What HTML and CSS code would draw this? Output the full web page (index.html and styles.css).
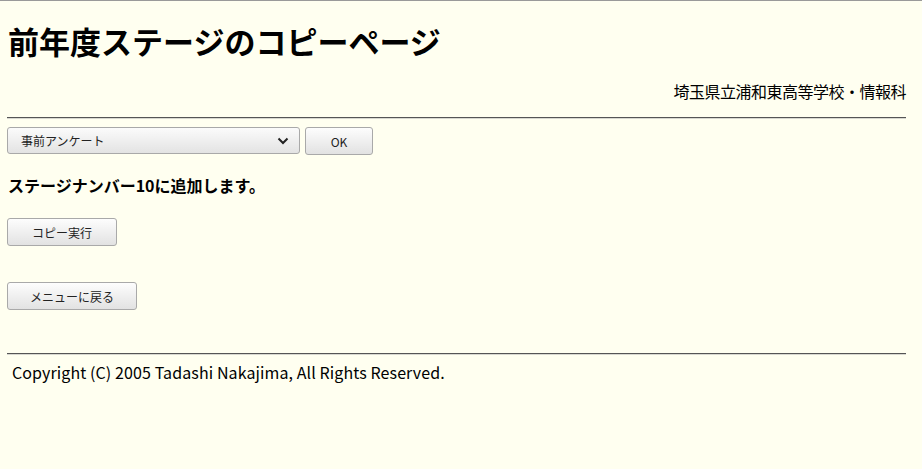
FILE: index.html
```html
<!DOCTYPE html>
<html lang="ja">
<head>
<meta charset="utf-8">
<title>前年度ステージのコピーページ</title>
<link rel="stylesheet" href="styles.css">
</head>
<body>
<h1 class="title">前年度ステージのコピーページ</h1>
<p class="school">埼玉県立浦和東高等学校・情報科</p>
<hr class="rule rule-top">
<form class="pick">
  <div class="select-wrap">
    <select class="select">
      <option>事前アンケート</option>
    </select>
    <svg class="chevron" width="12" height="8" viewBox="0 0 12 8"><path d="M1.5 1.5 L6 6 L10.5 1.5" fill="none" stroke="#222" stroke-width="2"/></svg>
  </div>
  <button type="button" class="btn btn-ok">OK</button>
</form>
<p class="notice">ステージナンバー10に追加します。</p>
<div class="actions">
  <button type="button" class="btn btn-copy">コピー実行</button>
  <button type="button" class="btn btn-menu">メニューに戻る</button>
</div>
<hr class="rule rule-bottom">
<p class="copyright">Copyright (C) 2005 Tadashi Nakajima, All Rights Reserved.</p>
</body>
</html>
```
FILE: styles.css
```css
html {
  background: #fffff0;
  border-top: 1px solid #9a9a9a;
}
body {
  margin: 0;
  padding: 0 16px 0 7px;
  font-family: "Noto Sans CJK JP", "Noto Sans", sans-serif;
  color: #000;
  font-size: 16px;
  line-height: 22px;
}
.title {
  margin: 21px 0 0 1px;
  font-size: 31px;
  line-height: 38px;
  font-weight: bold;
}
.school {
  margin: 20px 0 0;
  text-align: right;
  letter-spacing: -0.5px;
}
.rule {
  height: 0;
  border: 0;
  border-top: 1px solid #555;
  border-bottom: 1px solid #d8d8d0;
  margin: 0;
}
.rule-top { margin-top: 15px; }
.pick {
  display: flex;
  gap: 5px;
  margin-top: 8px;
}
.select-wrap {
  position: relative;
  width: 293px;
}
.select {
  appearance: none;
  -webkit-appearance: none;
  width: 100%;
  height: 27px;
  margin: 0;
  padding: 0 0 0 13px;
  border: 1px solid #a9a9a9;
  border-radius: 3px;
  background: linear-gradient(#fbfbfb, #e3e3e3);
  font-family: "Noto Sans CJK JP", sans-serif;
  font-size: 12px;
  color: #222;
}
.chevron {
  position: absolute;
  right: 11px;
  top: 10px;
  pointer-events: none;
}
.btn {
  height: 28px;
  margin: 0;
  padding: 0;
  border: 1px solid #a9a9a9;
  border-radius: 3px;
  background: linear-gradient(#fdfdfd, #e2e2e2);
  font-family: "Noto Sans CJK JP", sans-serif;
  font-size: 12px;
  color: #222;
}
.btn-ok { width: 68px; }
.btn-copy { width: 110px; }
.btn-menu { width: 130px; margin-top: 36px; }
.notice {
  margin: 19px 0 0 1px;
  font-weight: bold;
}
.actions {
  display: flex;
  flex-direction: column;
  align-items: flex-start;
  margin-top: 22px;
}
.rule-bottom { margin-top: 43px; }
.copyright {
  margin: 6px 0 0 5px;
  letter-spacing: 0.1px;
}
```
